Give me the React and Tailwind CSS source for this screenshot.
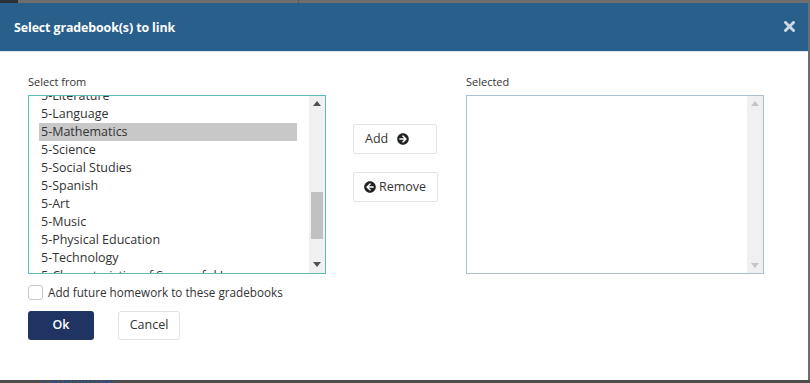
import React from "react";
import { FaArrowCircleRight, FaArrowCircleLeft } from "react-icons/fa";

const items = [
  "5-Literature",
  "5-Language",
  "5-Mathematics",
  "5-Science",
  "5-Social Studies",
  "5-Spanish",
  "5-Art",
  "5-Music",
  "5-Physical Education",
  "5-Technology",
  "5-Characteristics of Successful Learners",
];

function UpArrow({ color }) {
  return (
    <svg width="8" height="5" viewBox="0 0 8 5">
      <path d="M0 5 L4 0 L8 5 Z" fill={color} />
    </svg>
  );
}
function DownArrow({ color }) {
  return (
    <svg width="8" height="5" viewBox="0 0 8 5">
      <path d="M0 0 L8 0 L4 5 Z" fill={color} />
    </svg>
  );
}

export default function App() {
  return (
    <div
      className="w-[810px] h-[383px] bg-[#4d4d4d] flex flex-col overflow-hidden"
      style={{ fontFamily: "'Open Sans', 'Noto Sans', sans-serif" }}
    >
      <div className="h-[3px] bg-[#6e6e6e] flex">
        <div className="w-[18px] bg-[#2a2f36]" />
        <div className="w-[280px]" />
        <div className="w-[1px] bg-[#555]" />
      </div>
      <div className="flex">
        <div className="w-[808px] h-[377px] bg-white flex flex-col">
          {/* header */}
          <div className="h-[49px] bg-[#285f8b] flex items-center justify-between pl-[14px] pr-[13px] pt-[3px] border-b border-[#dfe5ea]">
            <span className="text-white font-bold text-[12.4px] tracking-[-0.1px]">
              Select gradebook(s) to link
            </span>
            <svg width="11" height="11" viewBox="0 0 11 11" className="mb-[4px]">
              <path d="M1.5 1.5 L9.5 9.5 M9.5 1.5 L1.5 9.5" stroke="#d0dae4" strokeWidth="2.8" strokeLinecap="square" />
            </svg>
          </div>
          {/* body */}
          <div className="flex pl-[28px] pt-[23px]">
            {/* left column */}
            <div className="flex flex-col w-[298px]">
              <div className="text-[11px] text-[#333] leading-[14px] h-[15px]">Select from</div>
              <div className="mt-[5px] h-[179px] border border-[#5cbdb6] flex overflow-hidden">
                <div className="flex-1 overflow-hidden pl-[10px] pr-[12px]">
                  <div className="mt-[-9px]">
                    {items.map((it) => (
                      <div
                        key={it}
                        className={
                          "h-[18px] leading-[18px] text-[12.5px] text-[#333] pl-[2px] whitespace-nowrap " +
                          (it === "5-Mathematics" ? "bg-[#c8c8c8]" : "")
                        }
                      >
                        {it}
                      </div>
                    ))}
                  </div>
                </div>
                <div className="w-[16px] bg-[#f0f0f0] flex flex-col items-center">
                  <div className="mt-[5px]"><UpArrow color="#505050" /></div>
                  <div className="mt-[86px] w-[12px] h-[47px] bg-[#c1c1c1]" />
                  <div className="mt-[23px]"><DownArrow color="#505050" /></div>
                </div>
              </div>
            </div>
            {/* middle buttons */}
            <div className="flex flex-col ml-[27px] pt-[49px] gap-[18px]">
              <button className="w-[84px] h-[30px] border border-[#e3e3e3] rounded-[2px] bg-white flex items-center pl-[11px] gap-[9px] text-[12.5px] text-[#333]">
                <span>Add</span>
                <FaArrowCircleRight className="text-[#222] w-[12px] h-[12px]" />
              </button>
              <button className="w-[85px] h-[30px] border border-[#e3e3e3] rounded-[2px] bg-white flex items-center pl-[10px] gap-[3px] text-[12.5px] text-[#333]">
                <FaArrowCircleLeft className="text-[#222] w-[12px] h-[12px]" />
                <span>Remove</span>
              </button>
            </div>
            {/* right column */}
            <div className="flex flex-col w-[298px] ml-[28px]">
              <div className="text-[11px] text-[#333] leading-[14px] h-[15px]">Selected</div>
              <div className="mt-[5px] h-[179px] border border-[#a9c0d3] flex overflow-hidden">
                <div className="flex-1" />
                <div className="w-[16px] bg-[#f0f0f0] flex flex-col items-center justify-between py-[5px]">
                  <UpArrow color="#c4c4c4" />
                  <DownArrow color="#c4c4c4" />
                </div>
              </div>
            </div>
          </div>
          {/* checkbox */}
          <div className="flex items-center pl-[28px] mt-[10px] gap-[5px]">
            <div className="w-[15px] h-[15px] border border-[#c8c8c8] rounded-[3px] bg-white" />
            <span className="text-[11.7px] text-[#333]">Add future homework to these gradebooks</span>
          </div>
          {/* footer buttons */}
          <div className="flex pl-[28px] mt-[9px] gap-[24px]">
            <button className="w-[66px] h-[29px] bg-[#1f3462] rounded-[3px] text-white text-[12.5px] font-semibold">
              Ok
            </button>
            <button className="w-[62px] h-[29px] bg-white border border-[#e3e3e3] rounded-[3px] text-[#333] text-[12.5px]">
              Cancel
            </button>
          </div>
        </div>
        <div className="w-[2px] h-[377px] bg-[#6e6e6e]" />
      </div>
      <div className="flex-1 bg-[#4d4d4d] pl-[42px] overflow-hidden">
        <div className="text-[#2b4f8c] text-[13px] font-semibold leading-[12px] mt-[-5px]">ℹ Add Notes</div>
      </div>
    </div>
  );
}
